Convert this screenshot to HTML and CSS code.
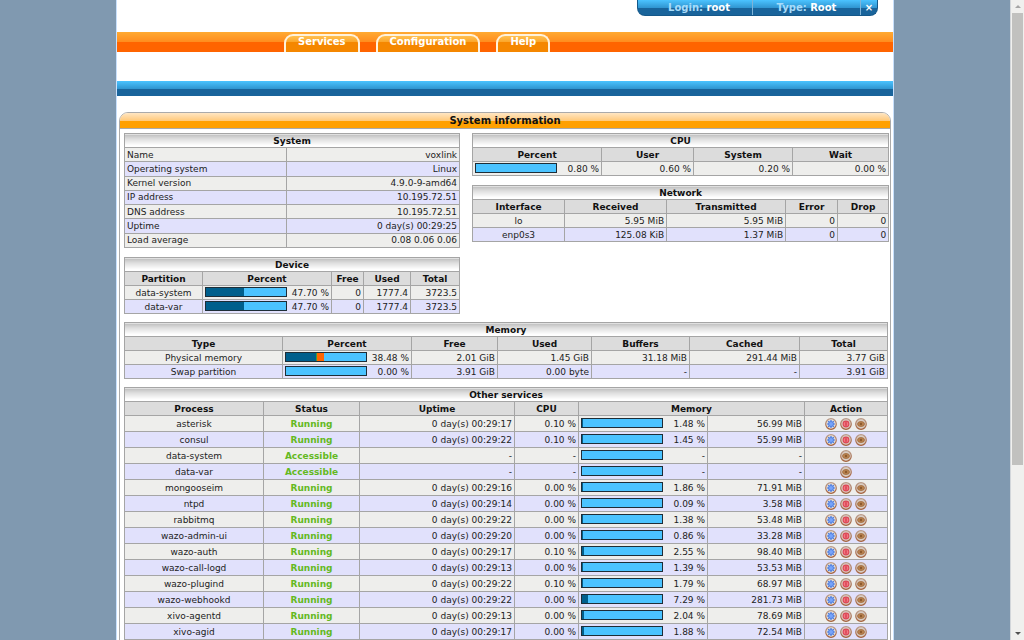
FILE: index.html
```html
<!DOCTYPE html>
<html lang="en">
<head>
<meta charset="utf-8">
<title>System information</title>
<link rel="stylesheet" href="styles.css">
</head>
<body>
<svg class="sprite" aria-hidden="true">
  <defs>
    <linearGradient id="rim" x1="0" y1="0" x2="0" y2="1">
      <stop offset="0" stop-color="#b99a88"/><stop offset="1" stop-color="#a5603a"/>
    </linearGradient>
  </defs>
  <symbol id="restart" viewBox="0 0 12 12">
    <circle cx="6" cy="6" r="5.3" fill="#e2ddd8" stroke="url(#rim)" stroke-width="1.2"/>
    <path d="M6 2v8M2 6h8M3.2 3.2l5.6 5.6M8.8 3.2l-5.6 5.6" stroke="#4678e0" stroke-width="1.2"/>
    <circle cx="6" cy="6" r="2.5" fill="#78a4fa" stroke="#4678e0" stroke-width=".8"/>
  </symbol>
  <symbol id="stop" viewBox="0 0 12 12">
    <circle cx="6" cy="6" r="5.3" fill="#dccdc6" stroke="url(#rim)" stroke-width="1.2"/>
    <circle cx="6" cy="6" r="2.9" fill="#f47882" stroke="#dc4655" stroke-width="1.1"/>
    <path d="M6 4.2v3.600" stroke="#c8283c" stroke-width="1"/>
  </symbol>
  <symbol id="watch" viewBox="0 0 12 12">
    <circle cx="6" cy="6" r="5.3" fill="#d9cdc4" stroke="url(#rim)" stroke-width="1.2"/>
    <ellipse cx="6" cy="6" rx="3.500" ry="2.500" fill="#b98250" stroke="#a06a3c" stroke-width=".8"/>
    <circle cx="6" cy="6" r="1.200" fill="#8c5a2d"/>
  </symbol>
</svg>
<div class="viewport">
  <div class="scroller">
    <div class="page">
      <header>
        <div class="session">
          <span class="cell login">Login: <b>root</b></span>
          <span class="cell type">Type: <b>Root</b></span>
          <a class="cell close" href="#logout" aria-label="Log out">×</a>
        </div>
        <nav class="tabs">
          <a href="#services">Services</a>
          <a href="#configuration">Configuration</a>
          <a href="#help">Help</a>
        </nav>
        <div class="subbar"></div>
      </header>
      <main class="panel">
        <h1>System information</h1>
        <div class="content">
          <div class="split">
            <div class="stack left">
              <table class="system">
                <colgroup><col><col></colgroup>
                <thead><tr class="title"><th colspan="2">System</th></tr></thead>
                <tbody>
                  <tr><td>Name</td><td>voxlink</td></tr>
                  <tr><td>Operating system</td><td>Linux</td></tr>
                  <tr><td>Kernel version</td><td>4.9.0-9-amd64</td></tr>
                  <tr><td>IP address</td><td>10.195.72.51</td></tr>
                  <tr><td>DNS address</td><td>10.195.72.51</td></tr>
                  <tr><td>Uptime</td><td>0 day(s) 00:29:25</td></tr>
                  <tr><td>Load average</td><td>0.08 0.06 0.06</td></tr>
                </tbody>
              </table>
              <table class="device four">
                <colgroup><col><col><col><col><col></colgroup>
                <thead>
                  <tr class="title"><th colspan="5">Device</th></tr>
                  <tr><th>Partition</th><th>Percent</th><th>Free</th><th>Used</th><th>Total</th></tr>
                </thead>
                <tbody>
                  <tr><td class="name">data-system</td><td><div class="usage"><span class="bar"><i class="used" style="width:47.7%"></i></span>47.70 %</div></td><td>0</td><td>1777.4</td><td>3723.5</td></tr>
                  <tr><td class="name">data-var</td><td><div class="usage"><span class="bar"><i class="used" style="width:47.7%"></i></span>47.70 %</div></td><td>0</td><td>1777.4</td><td>3723.5</td></tr>
                </tbody>
              </table>
            </div>
            <div class="stack right">
              <table class="cpu">
                <colgroup><col><col><col><col></colgroup>
                <thead>
                  <tr class="title"><th colspan="4">CPU</th></tr>
                  <tr><th>Percent</th><th>User</th><th>System</th><th>Wait</th></tr>
                </thead>
                <tbody>
                  <tr><td><div class="usage"><span class="bar"></span>0.80 %</div></td><td>0.60 %</td><td>0.20 %</td><td>0.00 %</td></tr>
                </tbody>
              </table>
              <table class="network four">
                <colgroup><col><col><col><col><col></colgroup>
                <thead>
                  <tr class="title"><th colspan="5">Network</th></tr>
                  <tr><th>Interface</th><th>Received</th><th>Transmitted</th><th>Error</th><th>Drop</th></tr>
                </thead>
                <tbody>
                  <tr><td class="name">lo</td><td>5.95 MiB</td><td>5.95 MiB</td><td>0</td><td>0</td></tr>
                  <tr><td class="name">enp0s3</td><td>125.08 KiB</td><td>1.37 MiB</td><td>0</td><td>0</td></tr>
                </tbody>
              </table>
            </div>
          </div>
          <table class="memory four">
            <colgroup><col><col><col><col><col><col><col></colgroup>
            <thead>
              <tr class="title"><th colspan="7">Memory</th></tr>
              <tr><th>Type</th><th>Percent</th><th>Free</th><th>Used</th><th>Buffers</th><th>Cached</th><th>Total</th></tr>
            </thead>
            <tbody>
              <tr><td class="name">Physical memory</td><td><div class="usage"><span class="bar"><i class="used" style="width:38%"></i><i class="buffers" style="width:1%"></i><i class="cached" style="width:8%"></i></span>38.48 %</div></td><td>2.01 GiB</td><td>1.45 GiB</td><td>31.18 MiB</td><td>291.44 MiB</td><td>3.77 GiB</td></tr>
              <tr><td class="name">Swap partition</td><td><div class="usage"><span class="bar"></span>0.00 %</div></td><td>3.91 GiB</td><td>0.00 byte</td><td>-</td><td>-</td><td>3.91 GiB</td></tr>
            </tbody>
          </table>
          <table class="services">
            <colgroup><col><col><col><col><col><col><col></colgroup>
            <thead>
              <tr class="title"><th colspan="7">Other services</th></tr>
              <tr><th>Process</th><th>Status</th><th>Uptime</th><th>CPU</th><th colspan="2">Memory</th><th>Action</th></tr>
            </thead>
            <tbody id="services"></tbody>
          </table>
        </div>
      </main>
    </div>
  </div>
  <div class="scrollbar" aria-hidden="true">
    <span class="arrow up"></span>
    <span class="track"><span class="thumb"></span></span>
    <span class="arrow down"></span>
  </div>
</div>
<script src="services.js"></script>
</body>
</html>
```
FILE: services.js
```js
// process, uptime, cpu %, memory %, resident memory
const services = [
  ["asterisk", "00:29:17", "0.10", "1.48", "56.99"],
  ["consul", "00:29:22", "0.10", "1.45", "55.99"],
  ["data-system"],
  ["data-var"],
  ["mongooseim", "00:29:16", "0.00", "1.86", "71.91"],
  ["ntpd", "00:29:14", "0.00", "0.09", "3.58"],
  ["rabbitmq", "00:29:22", "0.00", "1.38", "53.48"],
  ["wazo-admin-ui", "00:29:20", "0.00", "0.86", "33.28"],
  ["wazo-auth", "00:29:17", "0.10", "2.55", "98.40"],
  ["wazo-call-logd", "00:29:13", "0.00", "1.39", "53.53"],
  ["wazo-plugind", "00:29:22", "0.10", "1.79", "68.97"],
  ["wazo-webhookd", "00:29:22", "0.00", "7.29", "281.73"],
  ["xivo-agentd", "00:29:13", "0.00", "2.04", "78.69"],
  ["xivo-agid", "00:29:17", "0.00", "1.88", "72.54"]
];

const action = (icon, label) =>
  `<button type="button" aria-label="${label}"><svg><use href="#${icon}"/></svg></button>`;

document.getElementById("services").innerHTML = services.map(([name, up, cpu, mem, size]) => {
  const live = up !== undefined;
  const fill = live ? `<i class="used" style="width:${mem}%"></i>` : "";
  return `<tr>
    <td class="name">${name}</td>
    <td class="status">${live ? "Running" : "Accessible"}</td>
    <td>${live ? "0 day(s) " + up : "-"}</td>
    <td>${live ? cpu + " %" : "-"}</td>
    <td><div class="usage"><span class="bar">${fill}</span>${live ? mem + " %" : "-"}</div></td>
    <td>${live ? size + " MiB" : "-"}</td>
    <td><div class="actions">${live ? action("restart", "Restart " + name) + action("stop", "Stop " + name) : ""}${action("watch", "Monitor " + name)}</div></td>
  </tr>`;
}).join("");
```
FILE: styles.css
```css
* { box-sizing: border-box; }

body {
  margin: 0;
  background: #8099b0;
  color: #222;
  font: 9px/12px "DejaVu Sans", Verdana, sans-serif;
}

a { color: inherit; text-decoration: none; }

.sprite { position: absolute; width: 0; height: 0; }

.viewport { display: flex; height: 100vh; }
.scroller { flex: 1; overflow: hidden; }

.page {
  max-width: 778px;
  margin: 0 auto;
  padding-bottom: 16px;
  background: #fff;
  border: solid #c8e0fc;
  border-width: 0 1px;
}

/* Session box */
.session {
  display: flex;
  width: 241px;
  height: 16px;
  margin: 0 15px 0 auto;
  overflow: hidden;
  border-radius: 0 0 8px 8px;
  border: solid #14588a;
  border-width: 0 1px 1px;
  background: linear-gradient(#4bc3ff, #2f94cf 8px, #19649b 8px);
  color: #a8dcfa;
  font-size: 10px;
  line-height: 15px;
  font-weight: bold;
}
.session b { color: #fff; }
.cell { text-align: center; }
.cell + .cell { border-left: 1px solid #7fb4d8; }
.login { flex: 1; padding-left: 8px; }
.type { width: 108px; }
.close { width: 17px; color: #fff; }

/* Navigation */
.tabs {
  display: flex;
  gap: 16px;
  height: 20px;
  margin-top: 16px;
  padding: 2px 0 0 167px;
  background: linear-gradient(#ffaa32, #ff8c1e 10px, #ff6400 10px);
}
.tabs a {
  height: 18px;
  padding: 0 12px;
  border: solid #fff2dc;
  border-width: 2px 2px 0;
  border-radius: 9px 9px 0 0;
  background: linear-gradient(#ffc050, #fba62a 6px, #f58700 6px);
  color: #fff;
  font-size: 10px;
  line-height: 12px;
  font-weight: bold;
}
.subbar {
  height: 15px;
  margin-top: 29px;
  background: linear-gradient(#4bc3ff, #2f94cf 8px, #19649b 8px);
}

/* Panel */
.panel {
  margin: 16px 2px 0;
  border: 1px solid #aaa;
  border-radius: 9px 9px 0 0;
  overflow: hidden;
}
.panel h1 {
  margin: 0;
  height: 16px;
  border-bottom: 1px solid #aaa;
  background: linear-gradient(#ffe6c3, #ffc878 8px, #ffa000 8px);
  color: #111;
  font-size: 10px;
  line-height: 15px;
  text-align: center;
}
.content {
  display: flex;
  flex-direction: column;
  gap: 8px;
  padding: 4px;
}
.split { display: flex; gap: 12px; align-items: flex-start; }
.stack { display: flex; flex-direction: column; gap: 9px; }
.left { flex: 335; }
.right { flex: 416; }

/* Tables */
table {
  width: 100%;
  table-layout: fixed;
  border-collapse: collapse;
}
th, td {
  height: 14px;
  padding: 0 2px;
  border: 1px solid #a5a5a5;
  white-space: nowrap;
}
th { background: #dcdcdc; color: #111; }
td { text-align: right; }
tbody tr { background: #eeeeec; }
tbody tr:nth-child(even) { background: #e1e1fc; }
.title th { background: linear-gradient(#bebebe, #dcdcdc 4px, #fff 11px); }
.name { text-align: center; }
.status { text-align: center; color: #64b91e; font-weight: bold; }

.system { height: 115px; }
.system td:first-child { text-align: left; }
.cpu { height: 43px; }
.four { height: 57px; }
.services tbody td { height: 16px; }

.system col:nth-child(1) { width: 162px; }
.system col:nth-child(2) { width: 173px; }

.device col:nth-child(1) { width: 78px; }
.device col:nth-child(2) { width: 129px; }
.device col:nth-child(3) { width: 32px; }
.device col:nth-child(4) { width: 47px; }
.device col:nth-child(5) { width: 49px; }

.cpu col:nth-child(1) { width: 129px; }
.cpu col:nth-child(2) { width: 92px; }
.cpu col:nth-child(3) { width: 99px; }
.cpu col:nth-child(4) { width: 96px; }

.network col:nth-child(1) { width: 92px; }
.network col:nth-child(2) { width: 102px; }
.network col:nth-child(3) { width: 119px; }
.network col:nth-child(4) { width: 52px; }
.network col:nth-child(5) { width: 51px; }

.memory col:nth-child(1) { width: 158px; }
.memory col:nth-child(2) { width: 129px; }
.memory col:nth-child(3) { width: 86px; }
.memory col:nth-child(4) { width: 94px; }
.memory col:nth-child(5) { width: 98px; }
.memory col:nth-child(6) { width: 110px; }
.memory col:nth-child(7) { width: 88px; }

.services col:nth-child(1) { width: 139px; }
.services col:nth-child(2) { width: 96px; }
.services col:nth-child(3) { width: 155px; }
.services col:nth-child(4) { width: 64px; }
.services col:nth-child(5) { width: 129px; }
.services col:nth-child(6) { width: 97px; }
.services col:nth-child(7) { width: 83px; }

/* Usage meters */
.usage { display: flex; justify-content: space-between; align-items: flex-start; }
.bar {
  display: flex;
  width: 82px;
  height: 10px;
  border: 1px solid #1e2d37;
  background: #4bc3ff;
}
.used { background: #005f8c; }
.buffers { background: #3ca03c; }
.cached { background: #ff6400; }

.actions { display: flex; justify-content: center; gap: 3px; }
.actions button {
  width: 12px;
  height: 12px;
  padding: 0;
  border: 0;
  background: none;
}
.actions svg { display: block; width: 12px; height: 12px; }

/* Scrollbar */
.scrollbar {
  display: flex;
  flex-direction: column;
  width: 14px;
  border-left: 1px solid #d2d6da;
  background: #f0f0ee;
}
.arrow { display: flex; height: 13px; align-items: center; justify-content: center; }
.arrow::before { content: ""; border: 3px solid transparent; }
.up::before { border-top: 0; border-bottom-color: #a5a5a5; }
.down::before { border-bottom: 0; border-top-color: #505050; }
.track { flex: 1; padding: 0 1px; }
.thumb { display: block; height: 73.6%; background: #c1c1bf; }
```
